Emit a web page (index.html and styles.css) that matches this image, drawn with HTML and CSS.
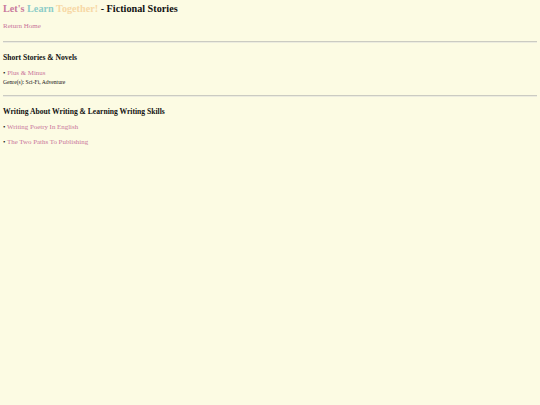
FILE: index.html
```html
<!DOCTYPE html>
<html lang="en">

<head>
    <meta charset="UTF-8">
    <title>Fictional Stories</title>
    <link rel="stylesheet" href="styles.css">
</head>

<body>
    <header class="pageHead">
        <h1 class="pageTitle">
            <span class="titleLets">Let's</span>
            <span class="titleLearn">Learn</span>
            <span class="titleTogether">Together!</span>
            - Fictional Stories
        </h1>
        <p class="homeLink"><a class="link" href="#">Return Home</a></p>
    </header>

    <hr class="divider">

    <!-- Short Stories -->
    <section class="section">
        <h2 class="sectionTitle">Short Stories &amp; Novels</h2>
        <ul class="storyList">
            <li>
                <p class="storyItem">&bull; <a class="link" href="#">Plus &amp; Minus</a></p>
                <p class="storyGenre">Genre(s): Sci-Fi, Adventure</p>
            </li>
        </ul>
    </section>

    <hr class="divider">

    <!-- Writing -->
    <section class="section">
        <h2 class="sectionTitle">Writing About Writing &amp; Learning Writing Skills</h2>
        <ul class="storyList">
            <li>
                <p class="storyItem">&bull; <a class="link" href="#">Writing Poetry In English</a></p>
            </li>
            <li>
                <p class="storyItem">&bull; <a class="link" href="#">The Two Paths To Publishing</a></p>
            </li>
        </ul>
    </section>
</body>

</html>
```

FILE: styles.css
```css
/* reset */
body,
h1,
h2,
ul,
li,
p {
    margin: 0;
    padding: 0;
}

li {
    list-style: none;
}

html {
    height: 100%;
    font-family: "Times New Roman", Times, "Liberation Serif", serif;
}

body {
    min-height: 100%;
    padding: 0 3px;
    box-sizing: border-box;
    background-color: #FCFBE3;
    color: #111111;
    font-size: 7px;
}

/* header */
.pageHead {
    padding-bottom: 10px;
}

.pageTitle {
    font-size: 10.2px;
    font-weight: 700;
    line-height: 18px;
}

.titleLets {
    color: #C97A9C;
}

.titleLearn {
    color: #8DCDC8;
}

.titleTogether {
    color: #F7D8A6;
}

.homeLink {
    margin-top: 3px;
    font-size: 7px;
    line-height: 10px;
}

.link {
    color: #C9739A;
    text-decoration: none;
}

.divider {
    margin: 0;
    border: none;
    border-top: 1px solid #CBCBC2;
    border-bottom: 1px solid #ECECDF;
}

/* sections */
.section {
    padding: 9px 0 9px;
}

.sectionTitle {
    font-size: 7.6px;
    font-weight: 700;
    line-height: 12px;
}

.storyList {
    margin-top: 4px;
}

.storyList>li:not(:first-child) {
    margin-top: 5px;
}

.storyItem {
    font-size: 6.9px;
    line-height: 10px;
}

.storyGenre {
    font-size: 5.6px;
    line-height: 8px;
}
```
